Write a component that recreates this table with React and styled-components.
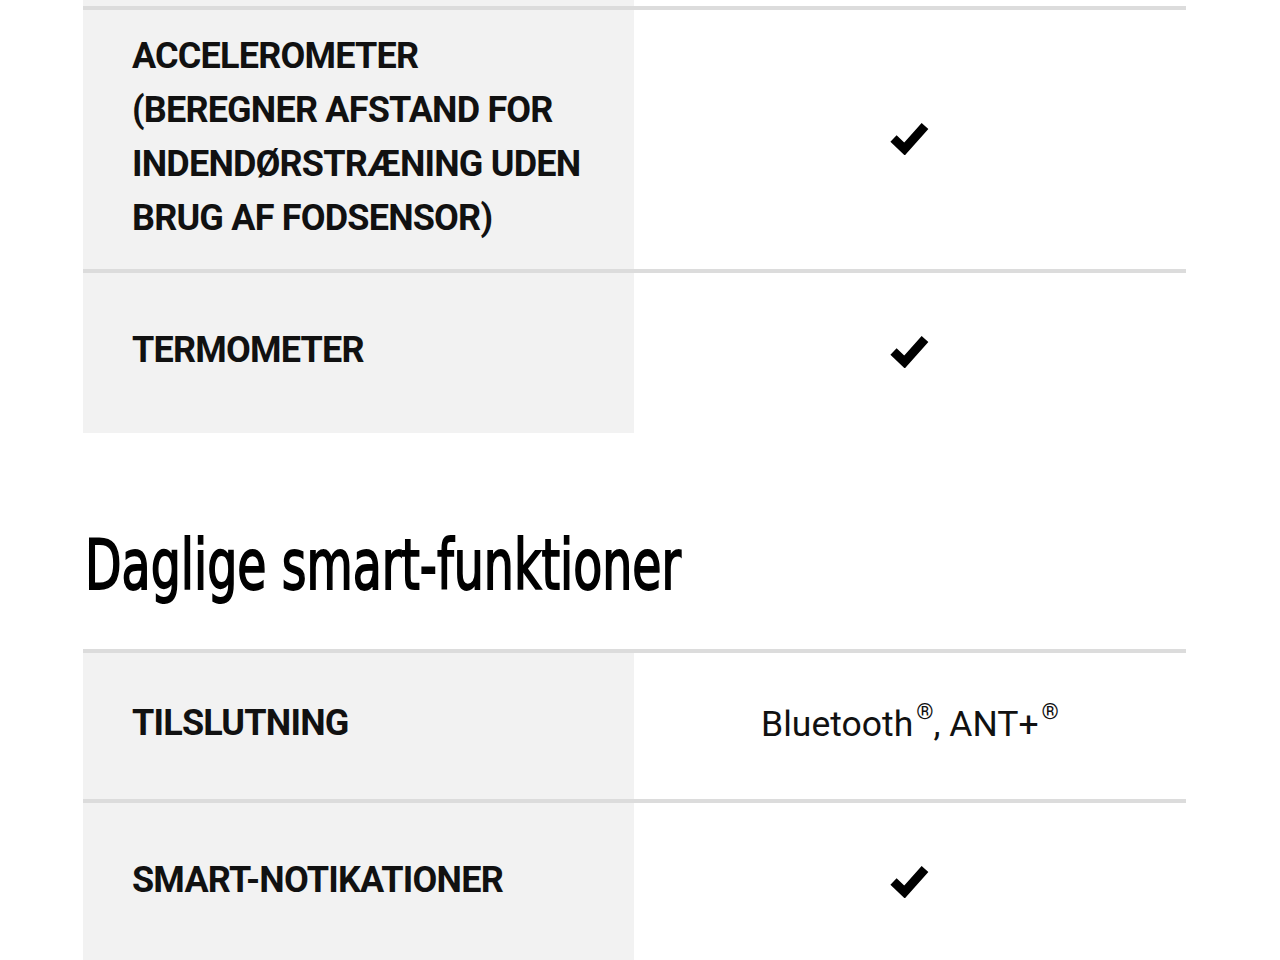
import React from "react";
import styled, { createGlobalStyle } from "styled-components";

const Global = createGlobalStyle`
  html, body { margin: 0; padding: 0; background: #fff; }
  body { font-family: Roboto, "Liberation Sans", Arial, sans-serif; color: #111; overflow: hidden; }
  * { box-sizing: border-box; }
`;

const Page = styled.div`
  width: 1103px;
  margin-left: 83px;
  height: 960px;
  overflow: hidden;
`;

const Table = styled.div`
  display: flex;
  flex-direction: column;
`;

const Row = styled.div`
  display: grid;
  grid-template-columns: 551px 1fr;
  height: ${(p) => p.$h}px;
  flex-shrink: 0;
  border-top: ${(p) => (p.$border ? "4px solid #dcdcdc" : "none")};
`;

const Label = styled.div`
  background: #f2f2f2;
  display: flex;
  align-items: center;
  padding: 0 40px 6px 49px;
  font-weight: 700;
  font-size: 36px;
  line-height: 54px;
  text-transform: uppercase;
  letter-spacing: -0.8px;
  color: #111;
`;

const Value = styled.div`
  display: flex;
  align-items: center;
  justify-content: center;
  padding-bottom: 4px;
  font-size: 35.5px;
  color: #111;
`;

const Reg = styled.sup`
  font-size: 22px;
  vertical-align: 0;
  position: relative;
  top: -13px;
  margin-left: 3px;
`;

const Heading = styled.h2`
  margin: 0;
  padding: 94px 0 45px 2px;
  font-family: "DejaVu Sans Condensed", "DejaVu Sans", sans-serif;
  font-stretch: condensed;
  font-weight: 400;
  font-size: 70px;
  line-height: 77px;
  color: #000;
  white-space: nowrap;
`;

const HeadingText = styled.span`
  display: inline-block;
  transform: scaleX(0.754);
  transform-origin: left center;
  -webkit-text-stroke: 1.8px #000;
`;

const CheckSvg = styled.svg`
  width: 40px;
  height: 34px;
  display: block;
`;

const Check = () => (
  <CheckSvg viewBox="0 0 40 34">
    <polyline
      points="3.5,17.5 14.5,28 35,5"
      fill="none"
      stroke="#000"
      strokeWidth="9"
      strokeLinecap="butt"
      strokeLinejoin="miter"
    />
  </CheckSvg>
);

export default function App() {
  return (
    <>
      <Global />
      <Page>
        <Table>
          <Row $h={6}>
            <Label />
            <div />
          </Row>
          <Row $h={263} $border>
            <Label>Accelerometer (beregner afstand for indendørstræning uden brug af fodsensor)</Label>
            <Value><Check /></Value>
          </Row>
          <Row $h={164} $border>
            <Label>Termometer</Label>
            <Value><Check /></Value>
          </Row>
        </Table>
        <Heading><HeadingText>Daglige smart-funktioner</HeadingText></Heading>
        <Table>
          <Row $h={150} $border>
            <Label>Tilslutning</Label>
            <Value>Bluetooth<Reg>®</Reg>, ANT+<Reg>®</Reg></Value>
          </Row>
          <Row $h={164} $border>
            <Label>Smart-notikationer</Label>
            <Value><Check /></Value>
          </Row>
        </Table>
      </Page>
    </>
  );
}
